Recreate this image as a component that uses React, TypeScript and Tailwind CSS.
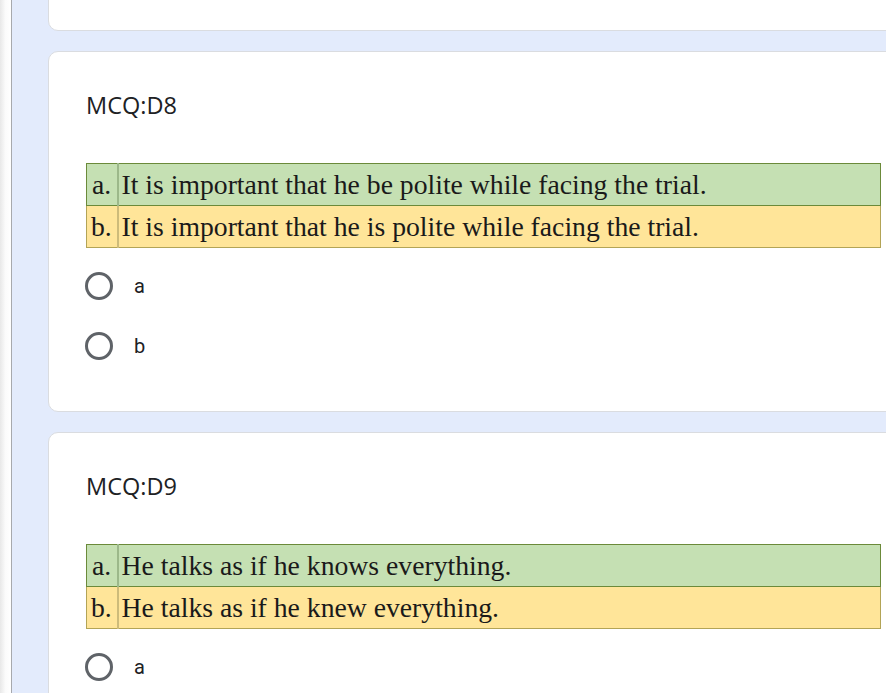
import React from "react";

interface Question {
  title: string;
  a: string;
  b: string;
}

const QUESTIONS: Question[] = [
  {
    title: "MCQ:D8",
    a: "It is important that he be polite while facing the trial.",
    b: "It is important that he is polite while facing the trial.",
  },
  {
    title: "MCQ:D9",
    a: "He talks as if he knows everything.",
    b: "He talks as if he knew everything.",
  },
];

function Radio({ label }: { label: string }) {
  return (
    <div className="flex h-[60px] items-center">
      <span className="ml-[-1px] h-[28px] w-[28px] rounded-full border-[3px] border-[#5f6368]" />
      <span className="ml-[21px] font-['Roboto',sans-serif] text-[20px] text-[#202124]">{label}</span>
    </div>
  );
}

function OptionTable({ a, b }: { a: string; b: string }) {
  const serif = "font-['Liberation_Serif','Times_New_Roman',serif] text-[27.7px] leading-none text-[#1a1a1a]";
  return (
    <table className={`w-[795px] border-collapse ${serif}`}>
      <tbody>
        <tr className="h-[42px] bg-[#c5e0b3]">
          <td className="w-[31px] border border-[#6b8a3a] border-r-[#9cb88a] pl-[5px] pt-[1px]">a.</td>
          <td className="border border-[#6b8a3a] border-l-2 border-l-[#9cb88a] pl-[3px] pt-[1px]">{a}</td>
        </tr>
        <tr className="h-[42px] bg-[#ffe599]">
          <td className="w-[31px] border border-[#b3a456] border-r-[#cdbb7a] pl-[4px] pt-[1px]">b.</td>
          <td className="border border-[#b3a456] border-l-2 border-l-[#cdbb7a] pl-[3px] pt-[1px]">{b}</td>
        </tr>
      </tbody>
    </table>
  );
}

function QuestionCard({ q }: { q: Question }) {
  return (
    <div className="mr-[-20px] rounded-l-[10px] border border-[#dadce0] bg-white pb-[35px] pl-[37px] pt-[37px]">
      <div className="font-['Open_Sans',sans-serif] text-[23.5px] leading-[32px] text-[#202124]">{q.title}</div>
      <div className="mt-[42px]">
        <OptionTable a={q.a} b={q.b} />
      </div>
      <div className="mt-[8px]">
        <Radio label="a" />
        <Radio label="b" />
      </div>
    </div>
  );
}

export default function App() {
  return (
    <div className="flex h-[693px] overflow-hidden bg-[#e3ebfc]">
      <div className="w-[12px] shrink-0 border-r border-[#a7a9ad] bg-gradient-to-r from-[#e8e8e8] via-[#fbfbfb] to-white" />
      <div className="flex min-w-0 flex-1 flex-col gap-[20px] pl-[36px]">
        <div className="mr-[-20px] mt-[-20px] h-[51px] shrink-0 rounded-l-[10px] border border-[#dadce0] bg-white" />
        {QUESTIONS.map((q) => (
          <QuestionCard key={q.title} q={q} />
        ))}
      </div>
    </div>
  );
}
